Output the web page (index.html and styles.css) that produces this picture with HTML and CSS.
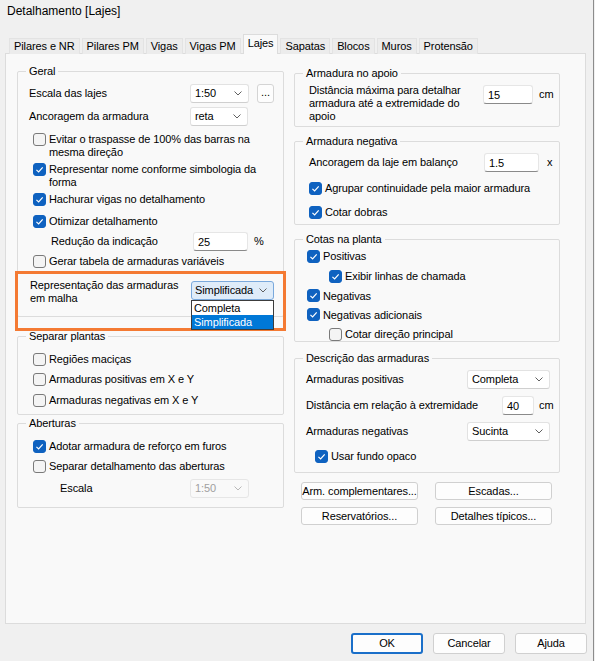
FILE: index.html
```html
<!DOCTYPE html>
<html lang="pt-BR">
<head>
  <meta charset="UTF-8">
  <meta name="viewport" content="width=device-width, initial-scale=1.0">
  <title>Detalhamento [Lajes]</title>
  <link rel="stylesheet" href="styles.css">
</head>
<body>
  <div class="window">
    <div class="titlebar">Detalhamento [Lajes]</div>

    <!-- Tabs -->
    <div class="tabs">
      <div class="tab">Pilares e NR</div>
      <div class="tab">Pilares PM</div>
      <div class="tab">Vigas</div>
      <div class="tab">Vigas PM</div>
      <div class="tab active">Lajes</div>
      <div class="tab">Sapatas</div>
      <div class="tab">Blocos</div>
      <div class="tab">Muros</div>
      <div class="tab">Protensão</div>
    </div>

    <div class="panel">
      <!-- Left column -->
      <div class="col col-left">
        <fieldset class="group geral">
          <legend>Geral</legend>
          <div class="field">
            <span class="label" style="width:161px">Escala das lajes</span>
            <div class="combo" style="width:59px">1:50<svg class="chev" viewBox="0 0 8 5"><path d="M0.5 0.5 L4 4 L7.5 0.5"/></svg></div>
            <div class="mini-btn">...</div>
          </div>
          <div class="field mt3">
            <span class="label" style="width:161px">Ancoragem da armadura</span>
            <div class="combo" style="width:58px">reta<svg class="chev" viewBox="0 0 8 5"><path d="M0.5 0.5 L4 4 L7.5 0.5"/></svg></div>
          </div>
          <div class="check multi mt7">
            <span class="box"></span>
            <span>Evitar o traspasse de 100% das barras na<br>mesma direção</span>
          </div>
          <div class="check multi mt4">
            <span class="box on"><svg viewBox="0 0 10 10"><path d="M2.2 5.3 L4.2 7.2 L7.9 3.1"/></svg></span>
            <span>Representar nome conforme simbologia da<br>forma</span>
          </div>
          <div class="check">
            <span class="box on"><svg viewBox="0 0 10 10"><path d="M2.2 5.3 L4.2 7.2 L7.9 3.1"/></svg></span>
            <span>Hachurar vigas no detalhamento</span>
          </div>
          <div class="check mt2">
            <span class="box on"><svg viewBox="0 0 10 10"><path d="M2.2 5.3 L4.2 7.2 L7.9 3.1"/></svg></span>
            <span>Otimizar detalhamento</span>
          </div>
          <div class="field reducao">
            <span class="label" style="width:142px">Redução da indicação</span>
            <div class="edit" style="width:55px">25</div>
            <span class="unit">%</span>
          </div>
          <div class="check">
            <span class="box"></span>
            <span>Gerar tabela de armaduras variáveis</span>
          </div>
          <div class="field tall mt8">
            <span class="label rep-label">Representação das armaduras<br>em malha</span>
            <div class="combo-wrap">
              <div class="combo focused" style="width:83px">Simplificada<svg class="chev" viewBox="0 0 8 5"><path d="M0.5 0.5 L4 4 L7.5 0.5"/></svg></div>
              <div class="dropdown">
                <div class="option">Completa</div>
                <div class="option selected">Simplificada</div>
              </div>
            </div>
          </div>
        </fieldset>

        <fieldset class="group separar">
          <legend>Separar plantas</legend>
          <div class="check">
            <span class="box"></span>
            <span>Regiões maciças</span>
          </div>
          <div class="check">
            <span class="box"></span>
            <span>Armaduras positivas em X e Y</span>
          </div>
          <div class="check mt1">
            <span class="box"></span>
            <span>Armaduras negativas em X e Y</span>
          </div>
        </fieldset>

        <fieldset class="group aberturas">
          <legend>Aberturas</legend>
          <div class="check">
            <span class="box on"><svg viewBox="0 0 10 10"><path d="M2.2 5.3 L4.2 7.2 L7.9 3.1"/></svg></span>
            <span>Adotar armadura de reforço em furos</span>
          </div>
          <div class="check">
            <span class="box"></span>
            <span>Separar detalhamento das aberturas</span>
          </div>
          <div class="field escala mt2">
            <span class="label" style="width:130px">Escala</span>
            <div class="combo disabled" style="width:59px">1:50<svg class="chev" viewBox="0 0 8 5"><path d="M0.5 0.5 L4 4 L7.5 0.5"/></svg></div>
          </div>
        </fieldset>

        <!-- annotation box around the mesh option -->
        <div class="highlight"></div>
      </div>

      <!-- Right column -->
      <div class="col col-right">
        <fieldset class="group apoio">
          <legend>Armadura no apoio</legend>
          <div class="field tall">
            <span class="label" style="width:174px">Distância máxima para detalhar<br>armadura até a extremidade do<br>apoio</span>
            <div class="edit" style="width:50px">15</div>
            <span class="unit cm">cm</span>
          </div>
        </fieldset>

        <fieldset class="group negativa">
          <legend>Armadura negativa</legend>
          <div class="field">
            <span class="label" style="width:175px">Ancoragem da laje em balanço</span>
            <div class="edit" style="width:55px">1.5</div>
            <span class="unit x">x</span>
          </div>
          <div class="check mt6">
            <span class="box on"><svg viewBox="0 0 10 10"><path d="M2.2 5.3 L4.2 7.2 L7.9 3.1"/></svg></span>
            <span>Agrupar continuidade pela maior armadura</span>
          </div>
          <div class="check mt4">
            <span class="box on"><svg viewBox="0 0 10 10"><path d="M2.2 5.3 L4.2 7.2 L7.9 3.1"/></svg></span>
            <span>Cotar dobras</span>
          </div>
        </fieldset>

        <fieldset class="group cotas">
          <legend>Cotas na planta</legend>
          <div class="check">
            <span class="box on"><svg viewBox="0 0 10 10"><path d="M2.2 5.3 L4.2 7.2 L7.9 3.1"/></svg></span>
            <span>Positivas</span>
          </div>
          <div class="check sub">
            <span class="box on"><svg viewBox="0 0 10 10"><path d="M2.2 5.3 L4.2 7.2 L7.9 3.1"/></svg></span>
            <span>Exibir linhas de chamada</span>
          </div>
          <div class="check short">
            <span class="box on"><svg viewBox="0 0 10 10"><path d="M2.2 5.3 L4.2 7.2 L7.9 3.1"/></svg></span>
            <span>Negativas</span>
          </div>
          <div class="check short">
            <span class="box on"><svg viewBox="0 0 10 10"><path d="M2.2 5.3 L4.2 7.2 L7.9 3.1"/></svg></span>
            <span>Negativas adicionais</span>
          </div>
          <div class="check sub last">
            <span class="box"></span>
            <span>Cotar direção principal</span>
          </div>
        </fieldset>

        <fieldset class="group descricao">
          <legend>Descrição das armaduras</legend>
          <div class="field">
            <span class="label" style="width:161px">Armaduras positivas</span>
            <div class="combo" style="width:83px">Completa<svg class="chev" viewBox="0 0 8 5"><path d="M0.5 0.5 L4 4 L7.5 0.5"/></svg></div>
          </div>
          <div class="field mt6">
            <span class="label" style="width:196px">Distância em relação à extremidade</span>
            <div class="edit" style="width:32px">40</div>
            <span class="unit cm2">cm</span>
          </div>
          <div class="field mt6">
            <span class="label" style="width:161px">Armaduras negativas</span>
            <div class="combo" style="width:83px">Sucinta<svg class="chev" viewBox="0 0 8 5"><path d="M0.5 0.5 L4 4 L7.5 0.5"/></svg></div>
          </div>
          <div class="check mt5">
            <span class="box on"><svg viewBox="0 0 10 10"><path d="M2.2 5.3 L4.2 7.2 L7.9 3.1"/></svg></span>
            <span>Usar fundo opaco</span>
          </div>
        </fieldset>

        <div class="btn-grid">
          <div class="btn">Arm. complementares...</div>
          <div class="btn">Escadas...</div>
          <div class="btn">Reservatórios...</div>
          <div class="btn">Detalhes típicos...</div>
        </div>
      </div>
    </div>

    <!-- Dialog buttons -->
    <div class="footer">
      <div class="btn dlg default">OK</div>
      <div class="btn dlg">Cancelar</div>
      <div class="btn dlg">Ajuda</div>
    </div>
  </div>
</body>
</html>
```

FILE: styles.css
```css
* {
  box-sizing: border-box;
}
body {
  margin: 0;
  width: 595px;
  height: 661px;
  background: #f0f0f0;
  font-family: 'Liberation Sans', Arial, sans-serif;
  font-size: 11px;
  letter-spacing: -0.1px;
  color: #000;
  overflow: hidden;
}
.window {
  width: 594px;
  height: 661px;
  border-right: 1px solid #8c8c8c;
}
.titlebar {
  height: 34px;
  padding: 4px 0 0 7px;
  font-size: 12px;
  line-height: 14px;
  letter-spacing: 0;
}

/* Tabs */
.tabs {
  display: flex;
  align-items: flex-end;
  height: 20px;
  padding-left: 9px;
  margin-bottom: -1px;
  position: relative;
  z-index: 1;
}
.tab {
  height: 16px;
  line-height: 15px;
  padding: 0 4px;
  margin-right: 2px;
  background: #ececec;
  border: 1px solid #e3e3e3;
  border-bottom: none;
}
.tab.active {
  height: 20px;
  line-height: 17px;
  background: #f9f9f9;
  border-color: #dcdcdc;
}

/* Panel */
.panel {
  width: 581px;
  height: 571px;
  margin-left: 5px;
  padding: 10px 0 0 11px;
  background: #f9f9f9;
  border: 1px solid #dcdcdc;
  display: grid;
  grid-template-columns: 267px 266px;
  column-gap: 10px;
  align-items: start;
}
.col-left {
  position: relative;
}
.col-right {
  padding-top: 2px;
}

/* Group boxes */
.group {
  margin: 0;
  padding: 0 6px 0 11px;
  min-width: 0;
  border: 1px solid #dcdcdc;
  border-radius: 2px;
}
.group legend {
  padding: 0 3px;
  margin-left: -3px;
  line-height: 14px;
}
.geral { padding-top: 5px; padding-bottom: 11px; }
.separar { margin-top: 12px; padding-top: 6px; padding-bottom: 4px; }
.aberturas { margin-top: 1px; padding-top: 6px; padding-bottom: 9px; }
.apoio { padding-top: 4px; padding-bottom: 3px; }
.negativa { margin-top: 7px; padding-top: 4px; padding-bottom: 2px; }
.cotas { margin-top: 7px; padding-top: 0; padding-bottom: 0; }
.descricao { margin-top: 9px; padding-top: 4px; padding-bottom: 6px; }

.mt1 { margin-top: 1px; }
.mt2 { margin-top: 2px; }
.mt3 { margin-top: 3px; }
.mt4 { margin-top: 4px; }
.mt5 { margin-top: 5px; }
.mt6 { margin-top: 6px; }
.mt7 { margin-top: 7px; }
.mt8 { margin-top: 8px; }

/* Rows */
.field {
  display: flex;
  align-items: center;
  height: 20px;
}
.field.tall {
  height: auto;
  align-items: flex-start;
  line-height: 13px;
}
.field .label {
  flex: none;
}
.reducao { padding-left: 22px; }
.escala { padding-left: 31px; }
.apoio .field,
.negativa .field { padding-left: 3px; }
.rep-label {
  width: 162px;
  padding-left: 1px;
}
.unit {
  margin-left: 6px;
}
.unit.cm { margin: 4px 0 0 6px; }
.unit.x { margin-left: 8px; }
.unit.cm2 { margin-left: 5px; }

.check {
  display: flex;
  align-items: center;
  height: 20px;
  padding-left: 4px;
}
.check.multi {
  height: auto;
  align-items: flex-start;
  line-height: 13px;
}
.negativa .check { padding-left: 3px; }
.cotas .check { padding-left: 1px; }
.cotas .check.sub { padding-left: 23px; }
.cotas .check.short { height: 19px; }
.cotas .check.last { margin-bottom: -3px; }
.descricao .check { padding-left: 9px; }

/* Checkbox */
.box {
  flex: none;
  width: 13px;
  height: 13px;
  margin-right: 3px;
  border: 1px solid #7a7a7a;
  border-radius: 3px;
  background: #f4f4f4;
}
.box.on {
  background: #0f62c0;
  border-color: #0f62c0;
}
.box svg {
  display: block;
  width: 11px;
  height: 11px;
  fill: none;
  stroke: #fff;
  stroke-width: 1.1;
}

/* Combo boxes and edits */
.combo {
  flex: none;
  display: flex;
  align-items: center;
  justify-content: space-between;
  height: 19px;
  padding: 0 6px 0 4px;
  background: #fff;
  border: 1px solid #e2e2e2;
  border-bottom-color: #cfcfcf;
  border-radius: 3px;
}
.chev {
  width: 8px;
  height: 5px;
  fill: none;
  stroke: #606060;
  stroke-width: 1;
}
.combo.disabled {
  color: #a0a0a0;
  background: #f9f9f9;
  border-color: #e6e6e6;
}
.combo.disabled .chev {
  stroke: #b8b8b8;
}
.combo.focused {
  padding-left: 3px;
  background: #dfecf9;
  border-color: #7aa9dc;
}
.combo-wrap {
  position: relative;
  margin-top: 2px;
}
.dropdown {
  position: absolute;
  top: 100%;
  left: 0;
  width: 83px;
  background: #fff;
  border: 1px solid #3c3c3c;
  z-index: 2;
}
.option {
  height: 14px;
  line-height: 14px;
  padding-left: 2px;
}
.option.selected {
  background: #0078d7;
  color: #fff;
}
.edit {
  flex: none;
  height: 19px;
  line-height: 18px;
  padding-left: 4px;
  background: #fff;
  border: 1px solid #e6e6e6;
  border-bottom-color: #8a8a8a;
  border-radius: 3px;
}
.apoio .edit { margin-top: 1px; }

.mini-btn {
  width: 17px;
  height: 19px;
  margin-left: 8px;
  line-height: 14px;
  text-align: center;
  background: #fdfdfd;
  border: 1px solid #d4d4d4;
  border-radius: 3px;
}

/* Buttons */
.btn-grid {
  display: grid;
  grid-template-columns: 117px 117px;
  column-gap: 17px;
  row-gap: 7px;
  margin: 9px 0 0 7px;
}
.btn {
  height: 18px;
  line-height: 16px;
  text-align: center;
  background: #fdfdfd;
  border: 1px solid #d0d0d0;
  border-radius: 3px;
}
.footer {
  display: flex;
  justify-content: flex-end;
  gap: 10px;
  padding: 9px 6px 0 0;
}
.btn.dlg {
  width: 72px;
  height: 21px;
  line-height: 19px;
}
.btn.default {
  border: 2px solid #1a6fc9;
  line-height: 17px;
}

/* Orange annotation */
.highlight {
  position: absolute;
  left: -2px;
  top: 207px;
  width: 271px;
  height: 60px;
  border: 3px solid #f47a33;
  pointer-events: none;
}
```
